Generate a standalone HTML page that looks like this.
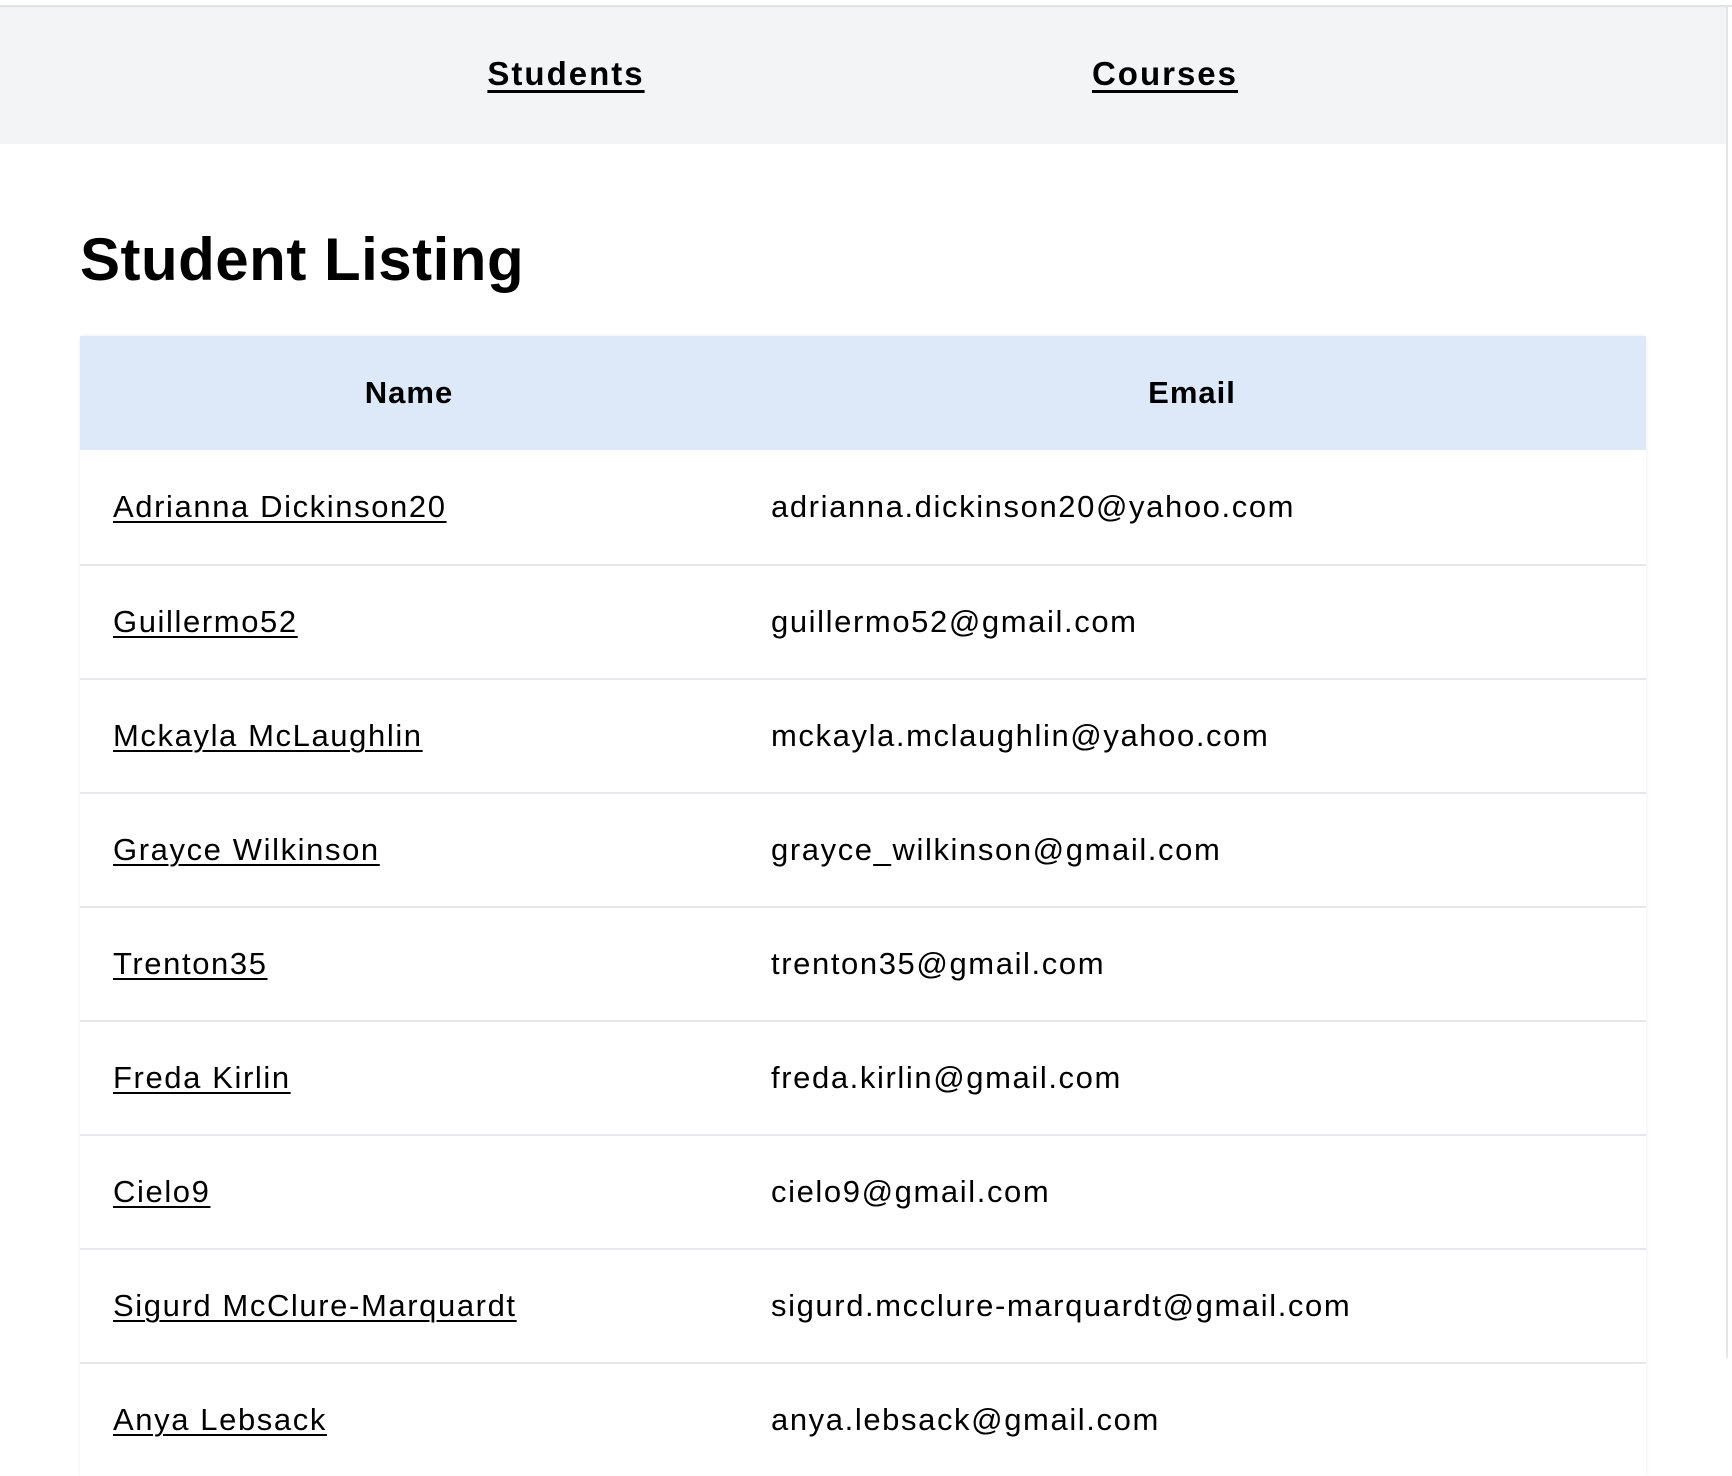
<!DOCTYPE html>
<html><head><meta charset="utf-8"><style>
html,body{margin:0;padding:0;}
body{width:1732px;height:1358px;overflow:hidden;background:#fff;font-family:"Liberation Sans",Arial,sans-serif;color:#000;position:relative;}
.topline{position:absolute;left:0;top:5px;width:1732px;height:2px;background:#e2e4e2;}
.rline{position:absolute;left:1726px;top:7px;width:2px;height:1351px;background:#e6e6e8;}
nav{position:absolute;left:0;top:7px;width:1726px;height:137px;background:#f3f4f6;}
nav a{position:absolute;top:48px;font-weight:bold;font-size:33px;letter-spacing:2px;color:#000;text-decoration:underline;text-decoration-thickness:3px;text-underline-offset:5px;transform:translateX(-50%);white-space:nowrap;}
h1{position:absolute;left:80px;top:222px;margin:0;font-size:60px;font-weight:bold;letter-spacing:0.5px;line-height:76px;}
table{position:absolute;left:80px;top:336px;width:1566px;border-collapse:collapse;box-shadow:0 0 4px rgba(0,0,0,0.08);}
th{background:#dde8f8;height:114px;font-size:31px;font-weight:bold;letter-spacing:1px;padding:0;}
td{height:112px;border-top:2px solid #e5e7eb;font-size:31px;letter-spacing:1.6px;padding:0;}
td.n{padding-left:33px;width:625px;}
td.n a{color:#000;text-decoration:underline;text-decoration-thickness:2px;text-underline-offset:4px;}
td.e{padding-left:33px;}
</style></head><body>
<div class="topline"></div>
<nav><a style="left:566px">Students</a><a style="left:1165px">Courses</a></nav>
<div class="rline"></div>
<h1>Student Listing</h1>
<table>
<tr><th style="width:658px">Name</th><th>Email</th></tr>
<tr><td class="n" style="border-top:none;height:114px"><a>Adrianna Dickinson20</a></td><td class="e" style="border-top:none">adrianna.dickinson20@yahoo.com</td></tr>
<tr><td class="n"><a>Guillermo52</a></td><td class="e">guillermo52@gmail.com</td></tr>
<tr><td class="n"><a>Mckayla McLaughlin</a></td><td class="e">mckayla.mclaughlin@yahoo.com</td></tr>
<tr><td class="n"><a>Grayce Wilkinson</a></td><td class="e">grayce_wilkinson@gmail.com</td></tr>
<tr><td class="n"><a>Trenton35</a></td><td class="e">trenton35@gmail.com</td></tr>
<tr><td class="n"><a>Freda Kirlin</a></td><td class="e">freda.kirlin@gmail.com</td></tr>
<tr><td class="n"><a>Cielo9</a></td><td class="e">cielo9@gmail.com</td></tr>
<tr><td class="n"><a>Sigurd McClure-Marquardt</a></td><td class="e">sigurd.mcclure-marquardt@gmail.com</td></tr>
<tr><td class="n"><a>Anya Lebsack</a></td><td class="e">anya.lebsack@gmail.com</td></tr>
</table>
</body></html>
